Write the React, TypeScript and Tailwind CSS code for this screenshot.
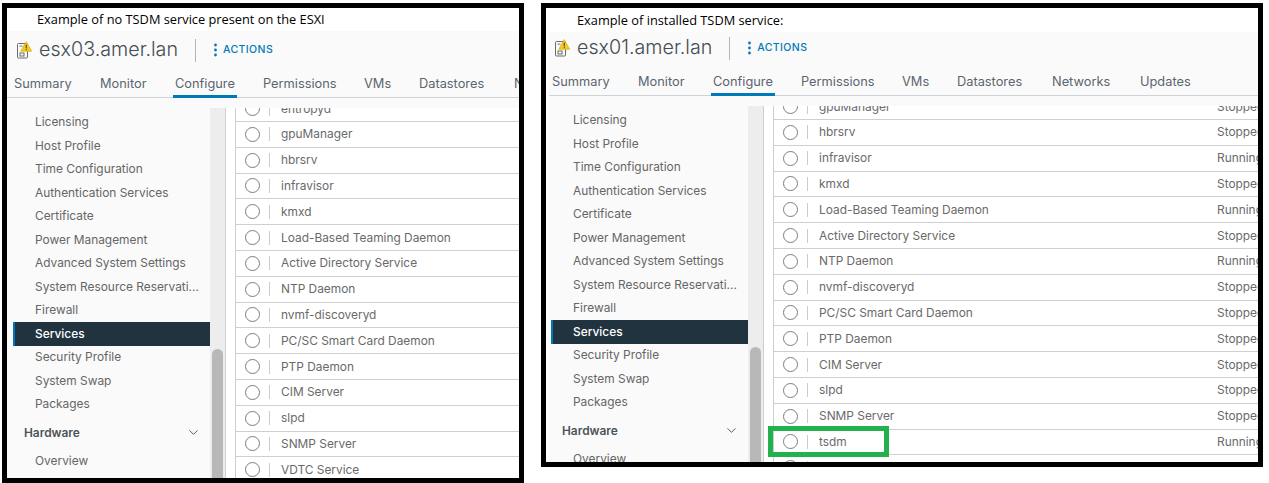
import React from 'react';
import { ChevronDown } from 'lucide-react';

const NAV = ['Licensing', 'Host Profile', 'Time Configuration', 'Authentication Services', 'Certificate', 'Power Management', 'Advanced System Settings', 'System Resource Reservati...', 'Firewall', 'Services', 'Security Profile', 'System Swap', 'Packages'];
const TABS = ['Summary', 'Monitor', 'Configure', 'Permissions', 'VMs', 'Datastores', 'Networks', 'Updates'];

const tabWidth: Record<string, string> = {
    Summary: 'w-[86px]', Monitor: 'w-[75px]', Configure: 'w-[88px]', Permissions: 'w-[101px]',
    VMs: 'w-[55px]', Datastores: 'w-[95px]', Networks: 'w-[88px]', Updates: 'w-[80px]',
};

const LEFT_ROWS = ['entropyd', 'gpuManager', 'hbrsrv', 'infravisor', 'kmxd', 'Load-Based Teaming Daemon', 'Active Directory Service', 'NTP Daemon', 'nvmf-discoveryd', 'PC/SC Smart Card Daemon', 'PTP Daemon', 'CIM Server', 'slpd', 'SNMP Server', 'VDTC Service'].map(name => ({ name, status: '' }));
const RIGHT_ROWS = [
    { name: 'gpuManager', status: 'Stopped' },
    { name: 'hbrsrv', status: 'Stopped' },
    { name: 'infravisor', status: 'Running' },
    { name: 'kmxd', status: 'Stopped' },
    { name: 'Load-Based Teaming Daemon', status: 'Running' },
    { name: 'Active Directory Service', status: 'Stopped' },
    { name: 'NTP Daemon', status: 'Running' },
    { name: 'nvmf-discoveryd', status: 'Stopped' },
    { name: 'PC/SC Smart Card Daemon', status: 'Stopped' },
    { name: 'PTP Daemon', status: 'Stopped' },
    { name: 'CIM Server', status: 'Stopped' },
    { name: 'slpd', status: 'Stopped' },
    { name: 'SNMP Server', status: 'Stopped' },
    { name: 'tsdm', status: 'Running' },
    { name: '', status: '' },
];

const HostIcon = () => (
    <svg width="15" height="18" viewBox="0 0 15 18" fill="none" className="shrink-0">
        <rect x="0.5" y="2.5" width="10" height="14.5" rx="1" stroke="#6b6b6b" strokeWidth="1" />
        <rect x="2.5" y="4.5" width="3" height="1.2" fill="#8a8a8a" />
        <rect x="3" y="12" width="4" height="3" stroke="#6b6b6b" strokeWidth="1" />
        <path d="M9.2 0.6 L14.7 10.2 L3.7 10.2 Z" fill="#f6cb1f" stroke="#d6a400" strokeWidth="0.6" />
        <rect x="8.7" y="3.6" width="1.1" height="3.8" fill="#444" />
        <rect x="8.7" y="8.1" width="1.1" height="1.1" fill="#444" />
    </svg>
);

const Row: React.FC<{ name: string; status: string }> = ({ name, status }) => (
    <div className="h-[25.8px] flex items-center border-b border-[#cfcfcf] w-[520px]">
        <span className="ml-[9px] w-[15px] h-[15px] rounded-full border border-[#7d7d7d] bg-white shrink-0"></span>
        <span className="ml-[9px] w-px h-[14px] bg-[#cccccc] shrink-0"></span>
        <span className="ml-[11px] w-[398px] shrink-0 text-[#6a6a6a]">{name}</span>
        <span className="text-[#6a6a6a]">{status}</span>
    </div>
);

const Panel: React.FC<{
    panelClass: string; captionClass: string; title: string; caption: string; rows: { name: string; status: string }[];
    tabs: string[]; headClass: string; navClass: string; titleClass: string; tabsClass: string; highlight?: boolean;
}> = ({ panelClass, captionClass, title, caption, rows, tabs, headClass, navClass, titleClass, tabsClass, highlight }) => (
    <div className={`${panelClass} border-[5px] border-black bg-white flex flex-col overflow-hidden shrink-0`}>
        <div className={captionClass} style={{ fontFamily: '"Open Sans", sans-serif' }}>{caption}</div>
        <div className={`${headClass} flex-1 min-h-0 flex flex-col bg-[#fafafa]`} style={{ fontFamily: 'Inter, sans-serif' }}>
            <div className={`${navClass} ${titleClass} flex items-center shrink-0 pl-[4px]`}>
                <HostIcon />
                <span className="ml-[7px] mr-[17px] text-[19.7px] font-light text-[#444c53] whitespace-nowrap">{title}</span>
                <span className="w-px h-[23px] bg-[#b5b5b5]"></span>
                <svg className="ml-[18px]" width="3" height="14" viewBox="0 0 3 14" fill="#0079b8"><circle cx="1.5" cy="2" r="1.4" /><circle cx="1.5" cy="7" r="1.4" /><circle cx="1.5" cy="12" r="1.4" /></svg>
                <span className="ml-[6px] text-[10.5px] font-medium tracking-[0.4px] text-[#0079b8]">ACTIONS</span>
            </div>
            <div className={`${tabsClass} flex shrink-0 border-b border-[#cdd3da] whitespace-nowrap text-[12.8px] text-[#5a6570]`}>
                {tabs.map(t => (
                    <div key={t} className={`h-full shrink-0 ${tabWidth[t]}`}>
                        <span className={t === 'Configure' ? 'inline-block h-[calc(100%+1px)] -ml-[2px] px-[2px] border-b-[3px] border-[#0079b8]' : ''}>{t}</span>
                    </div>
                ))}
            </div>
            <div className="relative flex-1 min-h-0 mt-[10px] flex bg-white text-[11.9px]">
                <div className="shrink-0 flex bg-[#fafafa] self-stretch overflow-hidden">
                    <div className={`${navClass} w-[197px] shrink-0 pt-[2.5px] text-[#666666]`}>
                        {NAV.map(n => (
                            <div key={n} className={n === 'Services' ? 'h-[23.5px] flex items-center pl-[20px] bg-[#21333f] border-l-2 border-[#0079b8] text-white font-medium' : 'h-[23.5px] flex items-center pl-[22px] whitespace-nowrap'}>{n}</div>
                        ))}
                        <div className="h-[33px] flex items-center justify-between pl-[11px] pr-[9px] font-semibold text-[#4b5359]">Hardware<ChevronDown size={15} strokeWidth={1.5} /></div>
                        <div className="h-[23px] flex items-center pl-[22px]">Overview</div>
                    </div>
                </div>
                <div className="w-[16px] shrink-0 bg-[#ededed] border-r border-[#d0d0d0] px-[2px] overflow-hidden">
                    <div className="h-[300px] mt-[241px] rounded-t-md bg-[#b8b8b8]"></div>
                </div>
                <div className="ml-[9px] flex-1 min-w-0 overflow-hidden border-l border-[#cfcfcf] bg-white">
                    <div className="mt-[-11.8px]">
                        {rows.map((r, i) => <Row key={i} name={r.name} status={r.status} />)}
                    </div>
                </div>
                {highlight && <div className="absolute left-[219px] top-[320px] w-[121px] h-[31px] border-[5px] border-[#22b14c]"></div>}
            </div>
        </div>
    </div>
);

export default function App() {
    return (
        <div className="h-[483px] bg-white pt-[3px] pl-[2px] flex items-start gap-[17px] overflow-hidden">
            <Panel panelClass="w-[522px] h-[480px]" captionClass="h-[23px] pl-[30px] text-[12.8px] leading-[23px] text-black"
                caption="Example of no TSDM service present on the ESXI" title="esx03.amer.lan" rows={LEFT_ROWS} tabs={TABS.slice(0, 7)}
                headClass="" navClass="ml-[6px]" titleClass="h-[38px]" tabsClass="h-[29px] pl-[7px] pt-[5px]" />
            <Panel panelClass="w-[722px] h-[464px]" captionClass="h-[24px] pl-[31px] text-[12.8px] leading-[25px] text-black"
                caption="Example of installed TSDM service:" title="esx01.amer.lan" rows={RIGHT_ROWS} tabs={TABS}
                headClass="ml-[3px]" navClass="ml-[2px]" titleClass="h-[32px]" tabsClass="h-[32px] pl-[3px] pt-[8px]" highlight />
        </div>
    );
}
